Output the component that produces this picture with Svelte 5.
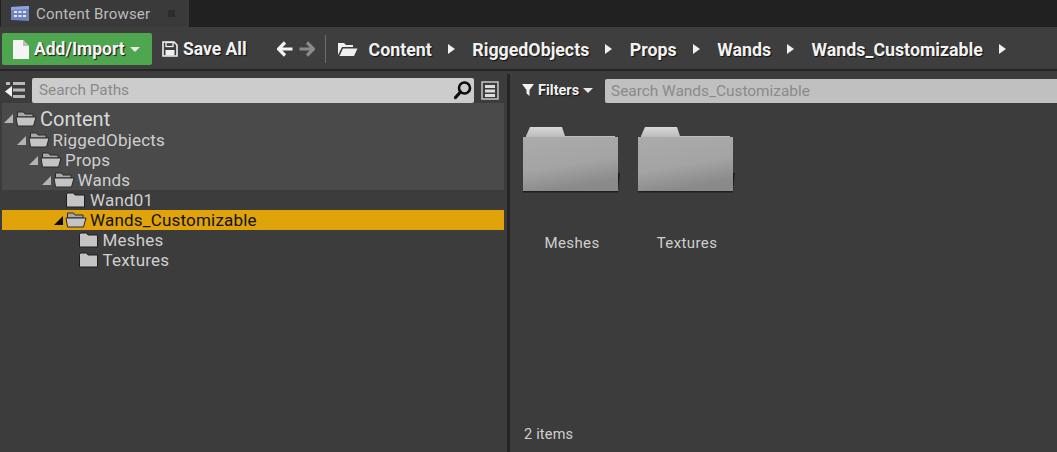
<script>
  const crumbs = ['Content', 'RiggedObjects', 'Props', 'Wands', 'Wands_Customizable'];
  const pinned = [
    { name: 'Content', depth: 0, big: true },
    { name: 'RiggedObjects', depth: 1 },
    { name: 'Props', depth: 2 },
    { name: 'Wands', depth: 3 }
  ];
  const rest = [
    { name: 'Wand01', depth: 4, leaf: true },
    { name: 'Wands_Customizable', depth: 4, selected: true },
    { name: 'Meshes', depth: 5, leaf: true },
    { name: 'Textures', depth: 5, leaf: true }
  ];
  const assets = ['Meshes', 'Textures'];
</script>

{#snippet row(r)}
  <div class="row" class:selected={r.selected} class:big={r.big}>
    <span class="indent" style="width:{r.depth * 12.5}px"></span>
    <span class="arrow">
      {#if !r.leaf}
        <svg width="11" height="11" viewBox="0 0 11 11"><path d="M10 1V10H1Z" fill={r.selected ? '#0c0c0c' : '#b4b4b4'}/></svg>
      {/if}
    </span>
    <svg class="tfolder" width="22" height="18" viewBox="0 0 22 18">
      {#if r.leaf}
        <path d="M1.500 3.500 2.500 2h6l1.500 2h9.500V16H1.500V3.500Z" fill="#c4c4c4" stroke="#1e1e1e" stroke-width="1"/>
      {:else}
        <path d="M2.500 4V2h6l1.500 2h8v3H2.500Z" fill="#a8a8a8" stroke="#2a2a2a" stroke-width="1"/>
        <path d="M1 7h20l-2.500 9H2.500Z" fill="#c4c4c4" stroke="#2a2a2a" stroke-width="1"/>
      {/if}
    </svg>
    <span class="label">{r.name}</span>
  </div>
{/snippet}

<div class="app">
  <div class="tabbar">
    <div class="tab">
      <svg width="20" height="18" viewBox="0 0 20 18">
        <path d="M1 2l18-1v15L1 15Z" fill="#6f83c0"/>
        <path d="M1 2l18-1v3L1 5Z" fill="#8fa4de"/>
        <g fill="#e4e8f4"><rect x="4" y="6" width="3" height="2"/><rect x="8.500" y="6" width="3" height="2"/><rect x="13" y="6" width="3" height="2"/><rect x="4" y="10" width="3" height="2"/><rect x="8.500" y="10" width="3" height="2"/><rect x="13" y="10" width="3" height="2"/></g>
      </svg>
      <span class="tabtitle">Content Browser</span>
      <span class="tabclose"></span>
    </div>
  </div>

  <div class="toolbar">
    <button class="add">
      <svg width="18" height="21" viewBox="0 0 18 21"><path d="M1 1h10l6 6v13H1Z" fill="#f4f4f4"/><path d="M11 1v6h6Z" fill="#bcbcbc"/></svg>
      <span>Add/Import</span>
      <span class="caret"></span>
    </button>
    <div class="save">
      <svg width="16" height="16" viewBox="0 0 16 16"><path d="M1 1h11l3 3v11H1Z" fill="none" stroke="#f0f0f0" stroke-width="1.600"/><rect x="4" y="1.500" width="7" height="4" fill="none" stroke="#f0f0f0" stroke-width="1.300"/><rect x="3.500" y="9" width="9" height="5.500" fill="#f0f0f0"/></svg>
      <span>Save All</span>
    </div>
    <div class="nav">
      <svg width="16" height="16" viewBox="0 0 16 16"><path d="M8 1.500 1.500 8 8 14.500M2 8h13.500" fill="none" stroke="#f4f4f4" stroke-width="3.200"/></svg>
      <svg width="16" height="16" viewBox="0 0 16 16"><path d="M8 1.500 14.500 8 8 14.500M14 8H.5" fill="none" stroke="#8a8a8a" stroke-width="3.200"/></svg>
    </div>
    <span class="vsep"></span>
    <svg class="openfolder" width="21" height="16" viewBox="0 0 21 16"><path d="M1 14V2h6l2 2h7v2H5L1 14Z" fill="#f0f0f0"/><path d="M6 7.500h14.500L17 15H2.500Z" fill="#f0f0f0"/></svg>
    <div class="crumbs">
      {#each crumbs as c}
        <span class="crumb">{c}</span>
        <svg class="sep" width="7" height="10" viewBox="0 0 7 10"><path d="M0 0l7 5-7 5Z" fill="#f0f0f0"/></svg>
      {/each}
    </div>
  </div>

  <div class="main">
    <aside class="left">
      <div class="pathbar">
        <svg class="collapse" width="22" height="18" viewBox="0 0 22 18">
          <rect x="8" y="1" width="12" height="3" fill="#b8b8b8"/><rect x="8" y="7.500" width="12" height="3" fill="#b8b8b8"/><rect x="8" y="14" width="12" height="3" fill="#b8b8b8"/>
          <rect x="1" y="1" width="4" height="3" fill="#b8b8b8"/>
          <path d="M7 5v11L0 10.500Z" fill="#f4f4f4"/>
        </svg>
        <div class="search">
          <span>Search Paths</span>
          <svg width="20" height="20" viewBox="0 0 20 20"><circle cx="11.500" cy="8" r="5.500" fill="none" stroke="#0c0c0c" stroke-width="2.600"/><path d="M7.500 12 2.500 17.500" stroke="#0c0c0c" stroke-width="3.200" stroke-linecap="round"/></svg>
        </div>
        <svg class="view" width="18" height="19" viewBox="0 0 18 19">
          <rect x="1" y="1" width="16" height="17" fill="#3c3c3c" stroke="#c4c4c4" stroke-width="1.500"/>
          <rect x="4" y="4" width="10" height="3" fill="#dcdcdc"/><rect x="4" y="8.500" width="10" height="3" fill="#dcdcdc"/><rect x="4" y="13" width="10" height="3" fill="#dcdcdc"/>
        </svg>
      </div>
      <div class="tree">
        <div class="pinned">
          {#each pinned as r}{@render row(r)}{/each}
        </div>
        {#each rest as r}{@render row(r)}{/each}
      </div>
    </aside>
    <div class="divider"></div>
    <section class="right">
      <div class="filterbar">
        <div class="filters">
          <svg width="12" height="12" viewBox="0 0 12 12"><path d="M0 0h12L7.500 6v6L4.500 9.500V6Z" fill="#f0f0f0"/></svg>
          <span>Filters</span>
          <span class="caret small"></span>
        </div>
        <div class="search2">Search Wands_Customizable</div>
      </div>
      <div class="grid">
        {#each assets as a, i}
          <div class="asset">
            <svg width="98" height="68" viewBox="0 0 98 68">
              <defs>
                <linearGradient id="back{i}" x1="0" y1="0" x2="0" y2="1"><stop offset="0" stop-color="#d8d8d8"/><stop offset="1" stop-color="#b0b0b0"/></linearGradient>
                <linearGradient id="front{i}" x1="0" y1="0" x2="0.3" y2="1"><stop offset="0" stop-color="#ababab"/><stop offset=".6" stop-color="#a4a4a4"/><stop offset="1" stop-color="#8a8a8a"/></linearGradient>
              </defs>
              <path d="M95 48l2 0-2 17Z" fill="#1c1c1c"/>
              <path d="M3 11 7 2h32l3 9h50v5H3Z" fill="url(#back{i})"/>
              <rect x="0" y="12" width="95" height="54" fill="url(#front{i})"/>
              <rect x="0" y="66" width="95" height="1.500" fill="#1e1e1e"/>
            </svg>
            <span class="aname">{a}</span>
          </div>
        {/each}
      </div>
      <div class="status">2 items</div>
    </section>
  </div>
</div>

<style>
  :global(body) { margin: 0; background: #3c3c3c; }
  .app {
    width: 1057px; height: 452px; overflow: hidden; display: flex; flex-direction: column;
    font-family: Roboto, "Liberation Sans", sans-serif; color: #d8d8d8; background: #3c3c3c;
  }
  .tabbar { height: 27px; background: #212121; display: flex; flex: none; }
  .tab {
    width: 188px; height: 27px; box-sizing: border-box; margin-left: 1px; padding-left: 9px; background: #3a3a3a;
    display: flex; align-items: center; gap: 6px;
  }
  .tabtitle { font-size: 15px; color: #bcbcbc; letter-spacing: .2px; width: 116px; }
  .tabclose { width: 7px; height: 7px; background: #2c2c2c; margin-left: 10px; }
  .toolbar {
    height: 44px; flex: none; box-sizing: border-box; background: #3e3e3e; display: flex; align-items: center;
    border-bottom: 2px solid #252525; padding: 4px 0 2px 2px;
    font-weight: 700; font-size: 17.500px; color: #f2f2f2; text-shadow: 1px 1px 1px #111;
  }
  .add {
    width: 150px; height: 32px; border: 0; border-radius: 2px; background: #4ea64e; color: #f4f4f4;
    font: inherit; text-shadow: inherit; display: flex; align-items: center; padding: 0 0 0 10px; gap: 4px;
  }
  .caret { width: 0; height: 0; border: 5px solid transparent; border-top: 5px solid #e8e8e8; border-bottom: 0; margin-left: 1px; }
  .save { display: flex; align-items: center; gap: 5px; margin-left: 10px; }
  .nav { display: flex; gap: 6px; margin-left: 30px; align-items: center; }
  .vsep { width: 1px; height: 28px; background: #6c6c6c; margin: 0 11px 0 10px; }
  .openfolder { margin-right: 11px; }
  .crumbs { display: flex; align-items: center; font-size: 17.800px; }
  .crumb { margin-right: 16px; }
  .sep { margin-right: 17.500px; }
  .main { flex: 1; display: flex; min-height: 0; }
  .left { width: 507px; flex: none; display: flex; flex-direction: column; }
  .divider { width: 3px; flex: none; background: #252525; margin-top: 3px; }
  .pathbar { height: 32px; flex: none; display: flex; align-items: center; padding: 6px 0 0 5px; box-sizing: border-box; }
  .collapse { margin-right: 5px; }
  .search {
    width: 442px; height: 25px; border-radius: 2px; background: #cccccc; color: #8a8a8a; font-size: 15.300px;
    display: flex; align-items: center; justify-content: space-between; padding: 0 1px 0 7px; box-sizing: border-box;
  }
  .view { margin-left: 7px; }
  .tree { padding-left: 2px; width: 502px; }
  .pinned { background: #4a4a4a; padding-top: 4px; }
  .row { height: 20px; display: flex; align-items: center; font-size: 17px; color: #cfcfcf; letter-spacing: .2px; }
  .row.big { height: 23px; font-size: 20px; color: #d8d8d8; letter-spacing: 0; }
  .row.selected { background: #e0a30a; color: #111; }
  .arrow { width: 11px; height: 11px; flex: none; display: flex; margin-left: 1px; }
  .tfolder { flex: none; margin: 0 1px 0 1px; }
  .label { margin-left: 2px; }
  .right { flex: 1; display: flex; flex-direction: column; min-width: 0; }
  .filterbar { height: 32px; flex: none; box-sizing: border-box; padding: 8px 0 0 12px; display: flex; align-items: center; }
  .filters { display: flex; align-items: center; gap: 4px; font-weight: 700; font-size: 14.500px; color: #f0f0f0; text-shadow: 1px 1px 1px #111; width: 83px; margin-bottom: 2px; }
  .caret.small { margin-left: 0; }
  .search2 {
    flex: 1; height: 24px; border-radius: 2px 0 0 2px; background: #c0c0c0; color: #8a8a8a; font-size: 15.400px; line-height: 24px; padding-left: 6px;
  }
  .grid { flex: 1; display: flex; gap: 17px; padding: 22px 0 0 13px; }
  .asset { width: 98px; display: flex; flex-direction: column; align-items: center; }
  .asset svg { display: block; }
  .aname { font-size: 15px; color: #cfcfcf; margin-top: 41px; letter-spacing: .4px; padding-left: 0; }
  .status { height: 26px; flex: none; font-size: 14.500px; color: #cfcfcf; padding-left: 14px; line-height: 18px; letter-spacing: .2px; }
</style>
